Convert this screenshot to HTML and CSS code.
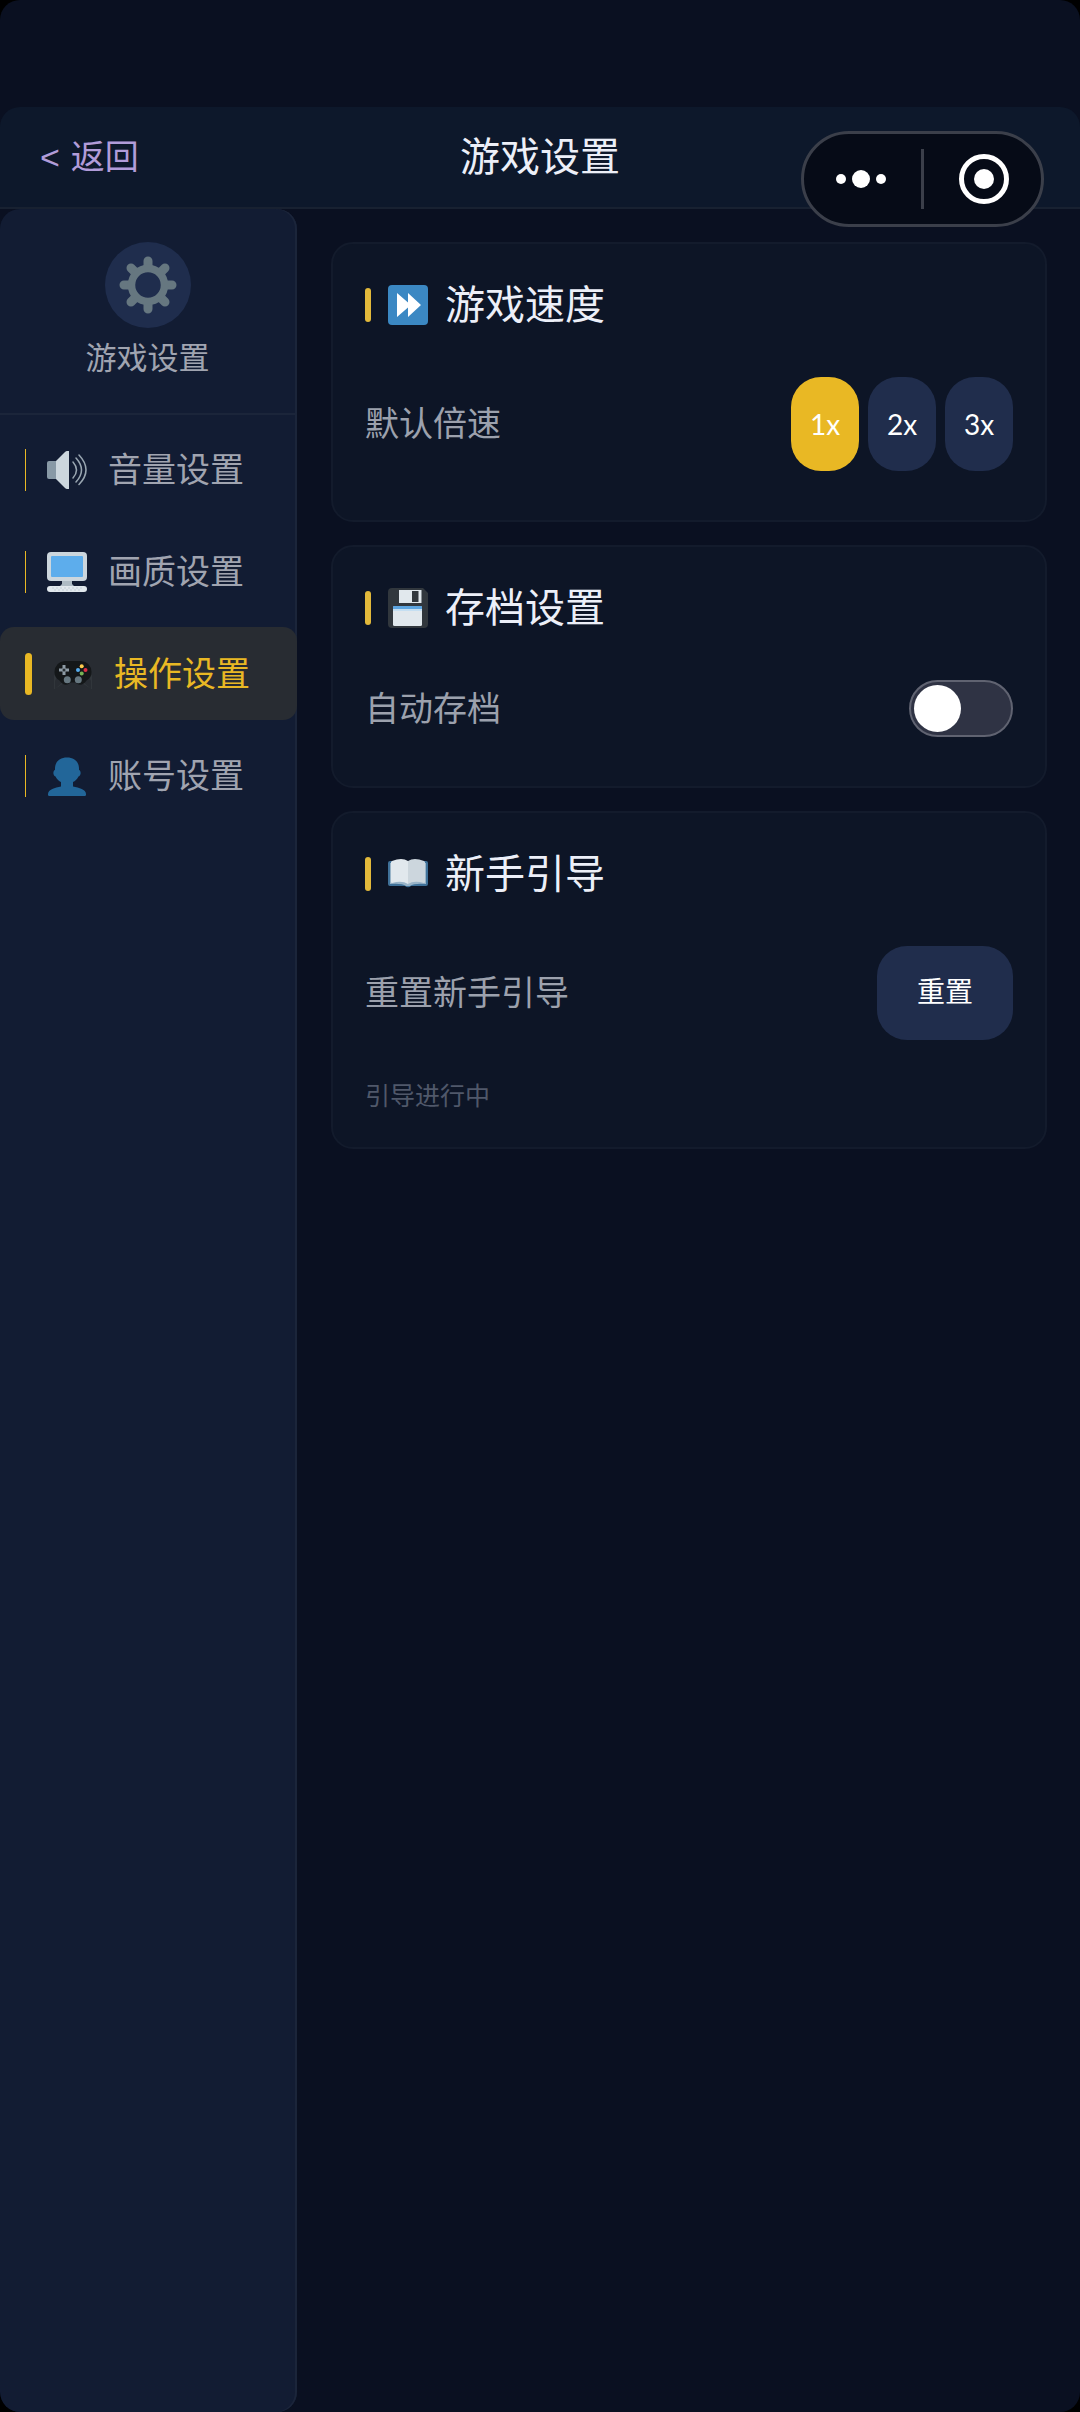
FILE: index.html
```html
<!DOCTYPE html>
<html lang="zh-CN">
<head>
<meta charset="utf-8">
<meta name="viewport" content="width=device-width, initial-scale=1">
<title>游戏设置</title>
<link rel="stylesheet" href="styles.css">
</head>
<body>
<div class="app">
  <header class="topbar">
    <a class="back" href="#"><span>&lt;</span><span>返回</span></a>
    <h1 class="topbar-title">游戏设置</h1>
  </header>

  <div class="capsule">
    <button class="capsule-btn" type="button" aria-label="更多">
      <svg width="52" height="52" viewBox="0 0 52 52" fill="#fff"><circle cx="5" cy="26" r="5"/><circle cx="25" cy="26" r="9"/><circle cx="45" cy="26" r="5"/></svg>
    </button>
    <span class="capsule-divider"></span>
    <button class="capsule-btn" type="button" aria-label="关闭">
      <svg width="52" height="52" viewBox="0 0 52 52"><circle cx="26" cy="26" r="22.500" fill="none" stroke="#fff" stroke-width="5"/><circle cx="26" cy="26" r="10" fill="#fff"/></svg>
    </button>
  </div>

  <div class="body">
    <aside class="sidebar">
      <div class="side-head">
        <span class="side-badge">
          <svg width="58" height="58" viewBox="0 0 58 58">
            <g stroke="#667780" stroke-width="9" stroke-linecap="round">
              <path d="M29 5v4M29 49v4M5 29h4M49 29h4M12 12l3 3M43 43l3 3M46 12l-3 3M15 43l-3 3"/>
            </g>
            <circle cx="29" cy="29" r="16.500" fill="none" stroke="#667780" stroke-width="7.500"/>
          </svg>
        </span>
        <span class="side-label">游戏设置</span>
      </div>
      <nav class="menu">
        <a class="menu-item" href="#volume">
          <span class="menu-bar"></span>
          <svg class="icon" viewBox="0 0 40 40">
            <path fill="#8899a6" d="M2 11h10v18H2a2 2 0 0 1-2-2V13a2 2 0 0 1 2-2z"/>
            <path fill="#ccd6dd" d="M22 1v38h-2q-1 0-2-1l-9-9V11l9-9q1-1 2-1z"/>
            <path fill="none" stroke="#99a6b1" stroke-width="1.500" stroke-linecap="round" d="M26 12q7 8 0 16M29 8q11 12 0 24M32 5q14 15 0 29.500"/>
          </svg>
          <span>音量设置</span>
        </a>
        <a class="menu-item" href="#quality">
          <span class="menu-bar"></span>
          <svg class="icon" viewBox="0 0 40 40">
            <path fill="#aebbc4" d="M15 28h10v4l3 3H12l3-3z"/>
            <rect width="40" height="29" rx="4" fill="#ccd6dd"/>
            <rect x="4" y="4" width="32" height="21" rx="1" fill="#5dadec"/>
            <rect y="34" width="40" height="6" rx="3" fill="#e1e8ed"/>
            <path stroke="#c3ced6" stroke-width="1" stroke-dasharray="2 2" d="M5 36h30M7 38h26"/>
          </svg>
          <span>画质设置</span>
        </a>
        <a class="menu-item menu-item-active" href="#controls" aria-current="page">
          <span class="menu-bar"></span>
          <svg class="icon" viewBox="0 0 40 40">
            <path fill="#31363b" d="M2 20l9 7-9 8H1V22zM38 20l-9 7 9 8h1V22zM2 35l12-8-9-6-3 6zM38 35l-12-8 9-6 3 6z"/>
            <path fill="#141719" d="M12 7h16q10 1 10.500 11 0 6-5 8.500-3 5-8 4-2-1-3-2h-5q-1 1-3 2-5 1-8-4-5-2.500-5-8.500Q2 8 12 7z"/>
            <path stroke="#8e9ba5" stroke-width="3" d="M11 11v10M6 16h10"/>
            <circle cx="11" cy="16" r="1.500" fill="#292f33"/>
            <circle cx="28.700" cy="12.300" r="2" fill="#ffcc4d"/><circle cx="32.500" cy="16" r="2" fill="#dd2e44"/>
            <circle cx="25" cy="16" r="2" fill="#55acee"/><circle cx="28.700" cy="19.500" r="2" fill="#77b255"/>
            <circle cx="14.300" cy="25.700" r="3.500" fill="#667780"/><circle cx="25.300" cy="25.700" r="3.500" fill="#667780"/>
          </svg>
          <span>操作设置</span>
        </a>
        <a class="menu-item" href="#account">
          <span class="menu-bar"></span>
          <svg class="icon" viewBox="0 0 40 40">
            <path fill="#226699" d="M20 1.500c8 0 12.500 5 12 12.500 2 .5 2.500 5-.5 6.500-1.500 3-3.500 4.500-5.500 5.500v4.500c6 1 13 3 13 7.500v1q0 1-1.500 1h-35Q1 40 1 39v-1c0-4.500 7-6.500 13-7.500V26c-2-1-4-2.500-5.500-5.500-3-1.500-2.500-6-.5-6.500C7.500 6.500 12 1.500 20 1.500z"/>
          </svg>
          <span>账号设置</span>
        </a>
      </nav>
    </aside>

    <main class="content">
      <section class="card">
        <h2 class="card-title">
          <span class="card-bar"></span>
          <svg class="icon" viewBox="0 0 40 40">
            <rect width="40" height="40" rx="4" fill="#3b88c3"/>
            <path fill="#fff" d="M9 8l11 9.500V8l13 12-13 12v-9.500L9 32z"/>
          </svg>
          <span>游戏速度</span>
        </h2>
        <div class="row">
          <span class="row-label" id="speed-label">默认倍速</span>
          <div class="speeds" role="group" aria-labelledby="speed-label">
            <button class="btn btn-speed btn-on" type="button" aria-pressed="true">1x</button>
            <button class="btn btn-speed" type="button" aria-pressed="false">2x</button>
            <button class="btn btn-speed" type="button" aria-pressed="false">3x</button>
          </div>
        </div>
      </section>

      <section class="card">
        <h2 class="card-title">
          <span class="card-bar"></span>
          <svg class="icon" viewBox="0 0 40 40">
            <path fill="#31373d" d="M4 0h31l5 5v31q0 4-4 4H4q-4 0-4-4V4q0-4 4-4z"/>
            <path fill="#e1e8ed" d="M11 2h22.500v13H11z"/>
            <path fill="#31373d" d="M24 3h6.500v11H24z"/>
            <rect x="5" y="18" width="29" height="20" rx="1.500" fill="#e1e8ed"/>
            <path fill="#5da5e0" d="M5 21v-2q0-1 1-1h27q1 0 1 1v2z"/>
            <path fill="#c5dff2" d="M5 21h29v2H5z"/>
          </svg>
          <span>存档设置</span>
        </h2>
        <div class="row">
          <label class="row-label" for="autosave">自动存档</label>
          <input class="switch" id="autosave" type="checkbox" role="switch">
        </div>
      </section>

      <section class="card">
        <h2 class="card-title">
          <span class="card-bar"></span>
          <svg class="icon" viewBox="0 0 40 40">
            <path fill="#3f7199" d="M2 7h36q2 0 2 2v21q0 2-2 2H23q-3 2.500-6 0H2q-2 0-2-2V9q0-2 2-2z"/>
            <path fill="#99b4c8" d="M2 9h36v21q-12-1-16 2h-4Q14 29 2 30z"/>
            <path fill="#e1e8ed" d="M4 7q10-4 16 0v23Q14 26 4 29q-1 0-1-1V8z"/>
            <path fill="#ccd6dd" d="M36 7q-10-4-16 0v23q6-4 16-1 1 0 1-1V8z"/>
          </svg>
          <span>新手引导</span>
        </h2>
        <div class="row">
          <span class="row-label">重置新手引导</span>
          <button class="btn btn-reset" type="button">重置</button>
        </div>
        <p class="hint">引导进行中</p>
      </section>
    </main>
  </div>
</div>
</body>
</html>
```
FILE: styles.css
```css
* {
  box-sizing: border-box;
}

body {
  margin: 0;
  background: #000;
  color: #eceff8;
  font-family: "Liberation Sans", "Noto Sans CJK SC", sans-serif;
  font-weight: 400;
}

h1, h2, p {
  margin: 0;
  font-weight: inherit;
}

a {
  color: inherit;
  text-decoration: none;
}

button {
  margin: 0;
  border: 0;
  padding: 0;
  background: none;
  color: inherit;
  font: inherit;
}

svg {
  display: block;
  flex: none;
}

.app {
  position: relative;
  display: flex;
  flex-direction: column;
  min-height: 100vh;
  padding-top: 107px;
  border-radius: 20px;
  overflow: hidden;
  background: #0a1021;
}

/* Top bar */
.topbar {
  display: grid;
  grid-template-columns: 1fr auto 1fr;
  align-items: center;
  height: 102px;
  padding: 0 40px;
  border-bottom: 2px solid #182131;
  border-radius: 20px 20px 0 0;
  background: #0d182b;
}

.back {
  display: flex;
  gap: 11px;
  color: #b19cd9;
  font-size: 34px;
  line-height: 50px;
}

.topbar-title {
  font-size: 40px;
  line-height: 58px;
}

/* Floating capsule over the top bar */
.capsule {
  position: absolute;
  top: 131px;
  right: 36px;
  display: flex;
  align-items: center;
  width: 243px;
  height: 96px;
  border: 3px solid #3b3f4a;
  border-radius: 48px;
  background: #060b17;
}

.capsule-btn {
  display: flex;
  flex: 1;
  justify-content: center;
}

.capsule-divider {
  width: 3px;
  height: 60px;
  margin: 0 2px;
  background: #3b3f4a;
}

.body {
  display: flex;
  flex: 1;
}

/* Sidebar */
.sidebar {
  flex: none;
  width: 297px;
  border-radius: 20px;
  background: #121c33;
  box-shadow: inset -2px 0 #1b253a;
}

.side-head {
  display: flex;
  flex-direction: column;
  align-items: center;
  gap: 8px;
  height: 206px;
  padding: 33px 2px 0 0;
  border-bottom: 2px solid #1b253a;
}

.side-badge {
  display: flex;
  align-items: center;
  justify-content: center;
  width: 86px;
  height: 86px;
  border-radius: 50%;
  background: #1f2d4d;
}

.side-label {
  color: #a0a4b0;
  font-size: 31px;
  line-height: 46px;
}

.menu {
  display: flex;
  flex-direction: column;
  gap: 9px;
  padding-top: 8px;
}

.menu-item {
  display: flex;
  align-items: center;
  gap: 21px;
  height: 93px;
  padding-left: 25px;
  border-radius: 14px;
  color: #a0a4b0;
  font-size: 34px;
  line-height: 48px;
}

.menu-bar {
  width: 1px;
  height: 42px;
  background: #e9b824;
}

.menu-item-active {
  background: #282c32;
  color: #e9b824;
}

.menu-item-active .menu-bar {
  width: 7px;
  border-radius: 4px;
}

.icon {
  width: 40px;
  height: 40px;
}

/* Setting cards */
.content {
  display: flex;
  flex: 1;
  flex-direction: column;
  gap: 23px;
  padding: 33px 33px 33px 34px;
}

.card {
  padding: 32px;
  border: 2px solid #131b2c;
  border-radius: 22px;
  background: #0d1526;
}

.card-title {
  display: flex;
  align-items: center;
  gap: 17px;
  margin-bottom: 26px;
  font-size: 40px;
  line-height: 58px;
}

.card-bar {
  width: 6px;
  height: 34px;
  border-radius: 3px;
  background: #e2b93b;
}

.row {
  display: flex;
  align-items: center;
  justify-content: space-between;
  padding: 17px 0;
}

.row-label {
  color: #9ca1ad;
  font-size: 34px;
  line-height: 48px;
}

.speeds {
  display: flex;
  gap: 9px;
}

.btn {
  height: 94px;
  border-radius: 30px;
  background: #202d4c;
  color: #fff;
  font-size: 28px;
  line-height: 40px;
}

.btn-speed {
  width: 68px;
  font-family: Lato, sans-serif;
}

.btn-on {
  background: #e9b824;
}

.btn-reset {
  width: 136px;
}

.switch {
  position: relative;
  appearance: none;
  width: 104px;
  height: 57px;
  margin: 0;
  border: 2px solid #606371;
  border-radius: 29px;
  background: #2f3344;
}

.switch::before {
  content: "";
  position: absolute;
  top: 3px;
  left: 3px;
  width: 47px;
  height: 47px;
  border-radius: 50%;
  background: #fff;
}

.switch:checked::before {
  right: 3px;
  left: auto;
}

.hint {
  margin-top: 20px;
  color: #50586a;
  font-size: 25px;
  line-height: 38px;
}
```
